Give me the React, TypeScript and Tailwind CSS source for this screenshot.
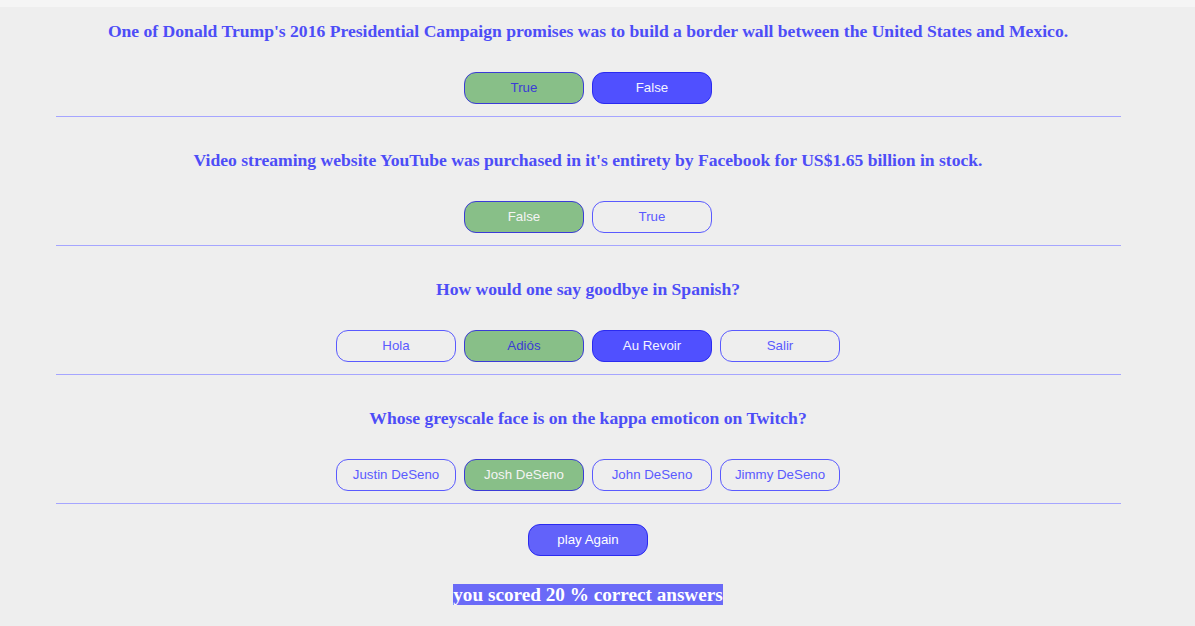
import React from 'react';

type Q = {
  question: string;
  answers: string[];
  correct: string;
  picked: string;
};

const questions: Q[] = [
  {
    question:
      "One of Donald Trump's 2016 Presidential Campaign promises was to build a border wall between the United States and Mexico.",
    answers: ['True', 'False'],
    correct: 'True',
    picked: 'False',
  },
  {
    question: "Video streaming website YouTube was purchased in it's entirety by Facebook for US$1.65 billion in stock.",
    answers: ['False', 'True'],
    correct: 'False',
    picked: 'False',
  },
  {
    question: 'How would one say goodbye in Spanish?',
    answers: ['Hola', 'Adiós', 'Au Revoir', 'Salir'],
    correct: 'Adiós',
    picked: 'Au Revoir',
  },
  {
    question: 'Whose greyscale face is on the kappa emoticon on Twitch?',
    answers: ['Justin DeSeno', 'Josh DeSeno', 'John DeSeno', 'Jimmy DeSeno'],
    correct: 'Josh DeSeno',
    picked: 'Josh DeSeno',
  },
];

function Answer({ label, q }: { label: string; q: Q }) {
  const isCorrect = label === q.correct;
  const isPicked = label === q.picked;

  let cls = 'bg-transparent border-[#5a5aff] text-[#5a5aff]';
  if (isCorrect) {
    cls = isPicked
      ? 'bg-[#88bf88] border-[#3b3bd6] text-[#f4f4f4]'
      : 'bg-[#88bf88] border-[#3b3bd6] text-[#3b3bd6]';
  } else if (isPicked) {
    cls = 'bg-[#5050ff] border-[#2a2af0] text-[#f4f4ff]';
  }

  return (
    <button
      className={`w-[120px] h-[32px] rounded-[12px] border text-[13.3px] font-['Liberation_Sans',Arial,sans-serif] ${cls}`}
    >
      {label}
    </button>
  );
}

export default function App() {
  const score = 20;

  return (
    <div className="min-h-[626px] w-full bg-[#eeeeee] font-['Liberation_Serif',serif]">
      <div className="h-[7px] bg-[#f5f5f5]" />
      <div className="w-[1176px] pt-[12px]">
        {questions.map((q, i) => (
          <div key={i}>
            <h2 className={`text-center text-[17.6px] leading-[24px] font-bold text-[#4d4df7] ${i > 0 ? 'mt-[31px]' : ''}`}>
              {q.question}
            </h2>
            <div className="mt-[29px] flex justify-center gap-[8px]">
              {q.answers.map((a) => (
                <Answer key={a} label={a} q={q} />
              ))}
            </div>
            <hr className="ml-[56px] mr-[55px] mt-[12px] border-0 border-t border-[#a5a5ff]" />
          </div>
        ))}

        <div className="mt-[20px] flex justify-center">
          <button className="w-[120px] h-[32px] rounded-[12px] border border-[#2a2af0] bg-[#6262fa] text-[13.3px] text-white font-['Liberation_Sans',Arial,sans-serif]">
            play Again
          </button>
        </div>

        <div className="mt-[28px] text-center">
          <span className="bg-[#6a6af7] text-white font-bold text-[19.2px] leading-[22px]">
            you scored {score} % correct answers
          </span>
        </div>
      </div>
    </div>
  );
}
